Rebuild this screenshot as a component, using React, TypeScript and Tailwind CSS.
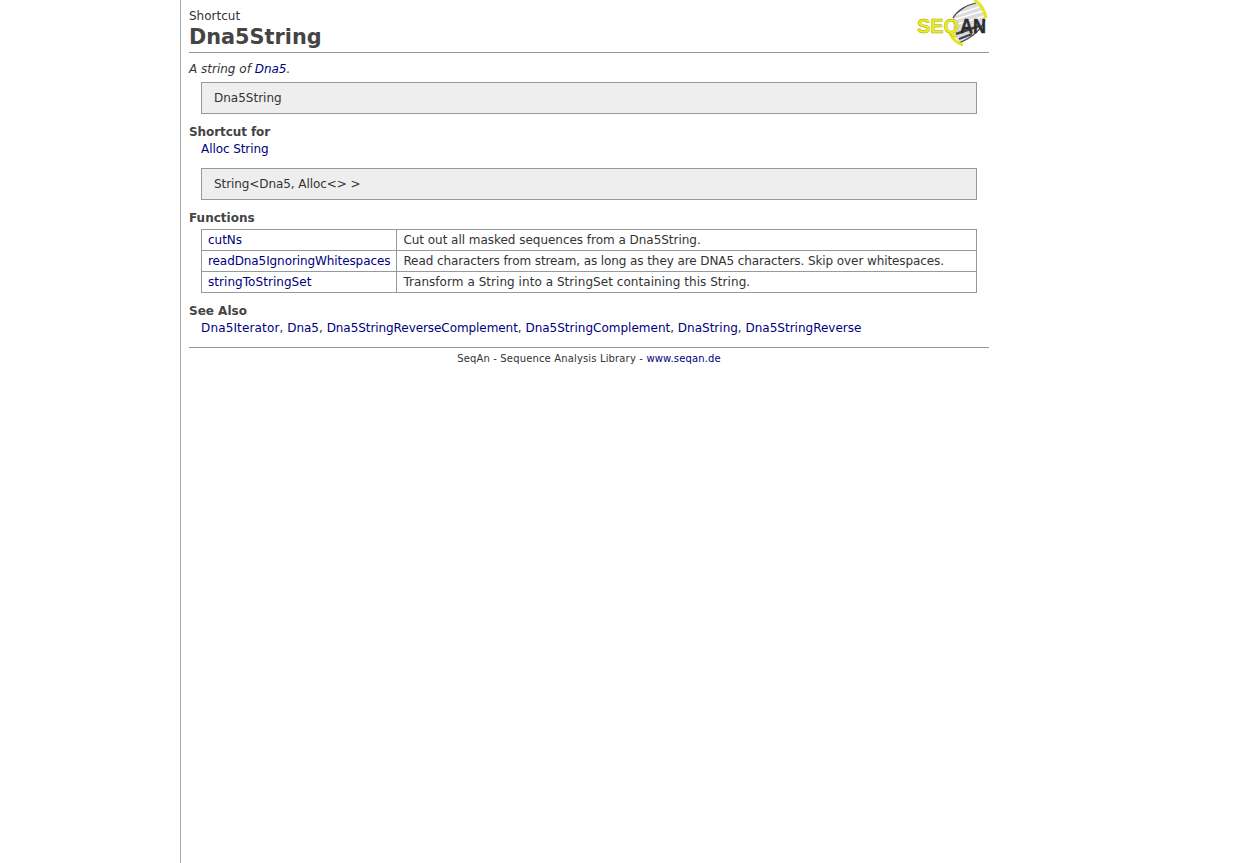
import React from "react";
const L = ({ children, className }: { children: React.ReactNode; className?: string }) => <a className={`text-[#000080] ${className ?? ""}`}>{children}</a>;

function Logo() {
  return (
    <svg width="72" height="46" viewBox="0 0 72 46" className="block">
      <path d="M36 18 C40 11 49 5 59 3 C64 7 68 13 68 20 C64 30 54 38 42 43 C38 36 35 27 36 18 Z" fill="#dcdcdc" />
      <path d="M38 15 L62 7 M36 20 L66 11 M37 25 L68 16" stroke="#fff" strokeWidth="1.6" fill="none" />
      <path d="M39 34 L62 26 M42 39 L55 34" stroke="#444" strokeWidth="2.4" fill="none" />
      <path d="M36 18 C40 11 49 5 59 3 M68 20 C64 30 54 38 42 43" stroke="#444" strokeWidth="1.2" fill="none" />
      <path d="M57 0 C63 3 68 10 69 18" stroke="#e6e619" strokeWidth="3" fill="none" />
      <path d="M33 33 C35 38 39 43 46 45" stroke="#e6e619" strokeWidth="3" fill="none" />
      <text x="0" y="33" fontFamily="'Liberation Sans',sans-serif" fontWeight="700" fontSize="21" fill="#eeee1a" stroke="#a8a800" strokeWidth="0.5" textLength="42" lengthAdjust="spacingAndGlyphs">SEQ</text>
      <text x="43" y="33" fontFamily="'Liberation Sans',sans-serif" fontWeight="700" fontSize="21" fill="#2c2c2c" stroke="#2c2c2c" strokeWidth="0.5" textLength="26" lengthAdjust="spacingAndGlyphs">AN</text>
    </svg>
  );
}

export default function App() {
  return (
    <div className="min-h-[863px] bg-white text-[12px] leading-[15px] text-[#333] font-['DejaVu_Sans',sans-serif]">
      <div className="ml-[180px] min-h-[863px] border-l border-[#aaa] pl-2 w-[810px]">
        <div className="w-[800px]">
          <div className="relative h-[53px] border-b border-[#999] pt-[9px]">
            <div className="leading-[14px]">Shortcut</div>
            <div className="text-[20.8px] font-bold leading-[28px] text-[#444]">Dna5String</div>
            <div className="absolute right-0 top-0"><Logo /></div>
          </div>
          <div className="mt-[9px] italic">A string of <L>Dna5</L>.</div>
          <div className="mx-3 mt-[5px] h-8 border border-[#999] bg-[#eee] px-3 pt-2">Dna5String</div>
          <div className="mt-[11px] font-bold text-[#444] tracking-[-0.08px]">Shortcut for</div>
          <div className="ml-3 mt-[2px] tracking-[-0.08px]"><L>Alloc String</L></div>
          <div className="mx-3 mt-[11px] h-8 border border-[#999] bg-[#eee] px-3 pt-2 tracking-[-0.08px]">String&lt;Dna5, Alloc&lt;&gt; &gt;</div>
          <div className="mt-[11px] font-bold text-[#444]">Functions</div>
          <table className="mx-3 mt-[3px] w-[776px] border-collapse">
            <tbody>
              <tr className="h-[21px] tracking-[-0.03px]">
                <td className="w-[195px] border border-[#999] px-[6px] whitespace-nowrap"><L>cutNs</L></td>
                <td className="border border-[#999] px-[6px]">Cut out all masked sequences from a Dna5String.</td>
              </tr>
              <tr className="h-[21px] tracking-[-0.09px]">
                <td className="w-[195px] border border-[#999] px-[6px] whitespace-nowrap"><L>readDna5IgnoringWhitespaces</L></td>
                <td className="border border-[#999] px-[6px]">Read characters from stream, as long as they are DNA5 characters. Skip over whitespaces.</td>
              </tr>
              <tr className="h-[21px] tracking-[0.05px]">
                <td className="w-[195px] border border-[#999] px-[6px] whitespace-nowrap"><L>stringToStringSet</L></td>
                <td className="border border-[#999] px-[6px]">Transform a String into a StringSet containing this String.</td>
              </tr>
            </tbody>
          </table>
          <div className="mt-[11px] font-bold text-[#444]">See Also</div>
          <div className="ml-3 mt-[2px]">
            <L className="tracking-[0.15px]">Dna5Iterator</L>, <L>Dna5</L>, <L className="tracking-[-0.07px]">Dna5StringReverseComplement</L>, <L>Dna5StringComplement</L>, <L>DnaString</L>, <L>Dna5StringReverse</L>
          </div>
          <div className="mt-[11px] border-t border-[#999] pt-[4px] text-center text-[10px] leading-[13px] tracking-[0.15px]">
            SeqAn - Sequence Analysis Library - <L>www.seqan.de</L>
          </div>
        </div>
      </div>
    </div>
  );
}
